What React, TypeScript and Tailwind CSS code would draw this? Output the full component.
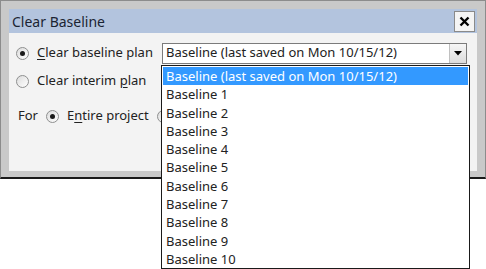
import React from "react";

const font = { fontFamily: '"Noto Sans", "Open Sans", Tahoma, sans-serif' };

const Radio = ({ checked }: { checked?: boolean }) => (
  <span className="relative inline-block w-[13px] h-[13px] rounded-full border border-[#8e8f8f] bg-gradient-to-br from-[#dcdcdc] to-white shrink-0">
    {checked && (
      <span className="absolute left-[3px] top-[3px] w-[5px] h-[5px] rounded-full bg-[#1a1a1a]" />
    )}
  </span>
);

const baselines = [
  "Baseline (last saved on Mon 10/15/12)",
  "Baseline 1",
  "Baseline 2",
  "Baseline 3",
  "Baseline 4",
  "Baseline 5",
  "Baseline 6",
  "Baseline 7",
  "Baseline 8",
  "Baseline 9",
  "Baseline 10",
];

export default function App() {
  return (
    <div className="relative w-[486px] h-[269px] bg-white overflow-hidden text-[13px] text-[#222]" style={font}>
      {/* dialog frame */}
      <div className="w-[486px] h-[179px] bg-[#c9c9c9] border border-[#8c8c8c] border-b-2 border-b-[#1a1a1a] px-[8px] pt-[8px] pb-[6px] flex flex-col">
        <div className="h-[24px] bg-[#b3c4de] flex items-center justify-between pl-[3px] pr-[2px]">
          <span className="text-[14px] text-[#1b2433]">Clear Baseline</span>
          <span className="w-[21px] h-[21px] bg-[#f4f4f4] border border-[#8a8a8a] flex items-center justify-center">
            <svg width="11" height="11" viewBox="0 0 11 11">
              <path d="M1.5 1.5 L9.5 9.5 M9.5 1.5 L1.5 9.5" stroke="#000" strokeWidth="2.4" />
            </svg>
          </span>
        </div>
        <div className="flex-1 bg-[#f3f3f3] pl-[7px] pt-[10px] flex flex-col">
          <div className="h-[20px] flex items-center">
            <Radio checked />
            <span className="ml-[8px] w-[125px]">
              <span className="underline underline-offset-2">C</span>lear baseline plan
            </span>
            <div className="w-[305px] h-[21px] bg-white border border-[#7b7b7b] flex items-center justify-between pl-[3px]">
              <span>Baseline (last saved on Mon 10/15/12)</span>
              <span className="w-[17px] h-[19px] bg-gradient-to-b from-[#f6f6f6] to-[#dcdcdc] border-l border-[#c0c0c0] flex items-center justify-center">
                <svg width="8" height="5" viewBox="0 0 8 5">
                  <path d="M0 0 H8 L4 4.5 Z" fill="#000" />
                </svg>
              </span>
            </div>
          </div>
          <div className="h-[20px] mt-[8px] flex items-center">
            <Radio />
            <span className="ml-[8px]">
              Clear interim <span className="underline underline-offset-2">p</span>lan
            </span>
          </div>
          <div className="h-[20px] mt-[15px] flex items-center">
            <span className="ml-[2px] w-[28px]">For</span>
            <Radio checked />
            <span className="ml-[8px] w-[90px]">
              E<span className="underline underline-offset-2">n</span>tire project
            </span>
            <Radio />
          </div>
        </div>
      </div>

      {/* opened dropdown list */}
      <div className="absolute left-[161px] top-[65px] w-[309px] h-[204px] bg-white border border-[#1a1a1a] p-[1px]">
        {baselines.map((b, i) => (
          <div
            key={b}
            className={
              i === 0
                ? "h-[18.3px] leading-[18.3px] pl-[3px] bg-[#3399ff] text-white"
                : "h-[18.3px] leading-[18.3px] pl-[3px]"
            }
          >
            {b}
          </div>
        ))}
      </div>
    </div>
  );
}
